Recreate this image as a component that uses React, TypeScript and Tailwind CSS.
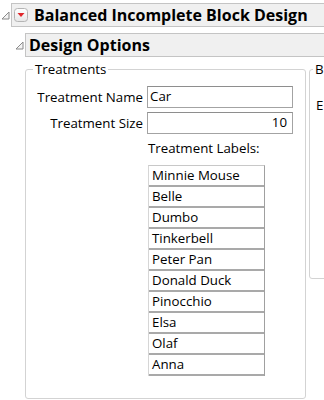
import React from "react";

const Disclosure = () => (
  <svg width="9" height="9" viewBox="0 0 9 9" className="shrink-0">
    <path d="M8 1 L8 8 L1 8 Z" fill="#f4f4f4" stroke="#8a8a8a" strokeWidth="1" strokeLinejoin="round" />
  </svg>
);

const RedButton = () => (
  <svg width="14" height="14" viewBox="0 0 14 14" className="shrink-0">
    <defs>
      <linearGradient id="rb" x1="0" y1="0" x2="0" y2="1">
        <stop offset="0" stopColor="#ffffff" />
        <stop offset="1" stopColor="#e6e6e6" />
      </linearGradient>
    </defs>
    <rect x="0.5" y="0.5" width="13" height="13" rx="3" fill="url(#rb)" stroke="#b4b4b4" />
    <path d="M3.5 5 L10.5 5 L7 9 Z" fill="#e0262a" />
  </svg>
);

const labels = [
  "Minnie Mouse",
  "Belle",
  "Dumbo",
  "Tinkerbell",
  "Peter Pan",
  "Donald Duck",
  "Pinocchio",
  "Elsa",
  "Olaf",
  "Anna",
];

export default function App() {
  return (
    <div
      className="w-[324px] h-[400px] overflow-hidden bg-white text-black"
      style={{ fontFamily: '"Open Sans", "Noto Sans", sans-serif' }}
    >
      {/* Header 1 */}
      <div className="flex items-center pt-[3px] pl-[1px]">
        <Disclosure />
        <div className="ml-[1px] flex h-[24px] w-[400px] shrink-0 items-center border border-[#c4c4c4] bg-[#f0f0f0] pl-[2px]">
          <RedButton />
          <span className="ml-[6px] text-[16px] font-bold leading-none whitespace-nowrap">
            Balanced Incomplete Block Design
          </span>
        </div>
      </div>
      {/* Header 2 */}
      <div className="flex items-center pt-[6px] pl-[15px]">
        <Disclosure />
        <div className="ml-[1px] flex h-[24px] w-[400px] shrink-0 items-center border border-[#c4c4c4] bg-[#f0f0f0] pl-[3px]">
          <span className="text-[16px] font-bold leading-none whitespace-nowrap">Design Options</span>
        </div>
      </div>
      {/* Content */}
      <div className="flex items-start pl-[25px] pt-[3px] text-[13.3px]">
        <fieldset className="w-[281px] h-[339px] shrink-0 rounded-[3px] border border-[#d3d3d3] px-0 pb-0">
          <legend className="ml-[7px] px-[2px] leading-[18px]">Treatments</legend>
          <div className="flex flex-col pt-[8px]">
            <div className="flex items-center">
              <div className="w-[117px] text-right leading-[18px] whitespace-nowrap">Treatment Name</div>
              <div className="ml-[4px] flex h-[22px] w-[146px] items-center border border-[#a3a3a3] border-t-[#8e8e8e] px-[2px] leading-none">
                Car
              </div>
            </div>
            <div className="mt-[4px] flex items-center">
              <div className="w-[117px] text-right leading-[18px] whitespace-nowrap">Treatment Size</div>
              <div className="ml-[4px] flex h-[22px] w-[146px] items-center justify-end border border-[#a3a3a3] border-t-[#8e8e8e] px-[5px] leading-none">
                10
              </div>
            </div>
            <div className="ml-[122px] mt-[5px] leading-[18px]">Treatment Labels:</div>
            <div className="ml-[122px] mt-[8px] w-[117px] border-t border-l border-r border-t-[#c8c8c8] border-l-[#d6d6d6] border-r-[#a0a0a0]">
              {labels.map((l) => (
                <div
                  key={l}
                  className="flex h-[21px] items-center border-b-2 border-[#a9a9a9] pl-[3px] leading-none whitespace-nowrap"
                >
                  {l}
                </div>
              ))}
            </div>
          </div>
        </fieldset>
        <fieldset className="ml-[3px] w-[100px] h-[219px] shrink-0 rounded-[3px] border border-[#d3d3d3] px-0 pb-0">
          <legend className="ml-[3px] px-[2px] leading-[18px]">B</legend>
          <div className="pt-[18px] pl-[6px] leading-[18px]">E</div>
        </fieldset>
      </div>
    </div>
  );
}
